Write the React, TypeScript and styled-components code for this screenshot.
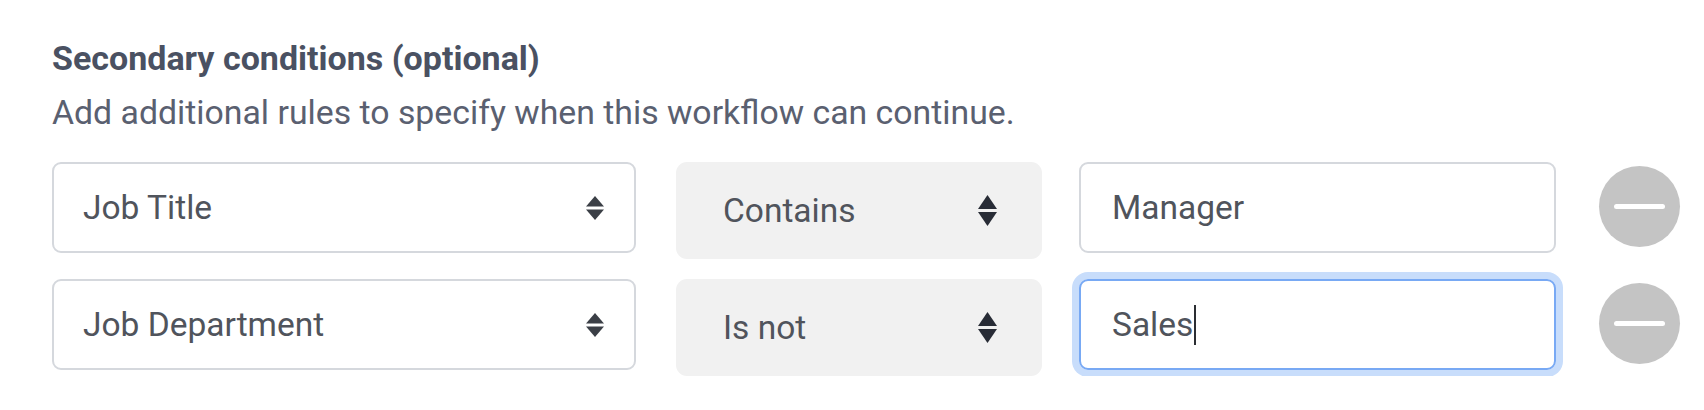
import React from "react";
import styled, { createGlobalStyle } from "styled-components";

const Global = createGlobalStyle`
  html, body { margin: 0; padding: 0; background: #ffffff; }
  body { font-family: Roboto, "Noto Sans", sans-serif; }
`;

const Page = styled.div`
  padding: 38px 0 0 52px;
  display: flex;
  flex-direction: column;
`;

const Title = styled.h2`
  margin: 0;
  font-family: Roboto, sans-serif;
  font-weight: 700;
  font-size: 34px;
  line-height: 40px;
  color: #4a5162;
`;

const Subtitle = styled.p`
  margin: 15px 0 0 0;
  font-family: Roboto, sans-serif;
  font-weight: 400;
  font-size: 33.8px;
  line-height: 40px;
  color: #5a6070;
`;

const Rows = styled.div`
  display: flex;
  flex-direction: column;
  gap: 20px;
  margin-top: 29px;
`;

const Row = styled.div`
  display: flex;
  align-items: flex-start;
`;

const OutlinedSelect = styled.div`
  box-sizing: border-box;
  width: 584px;
  height: 91px;
  border: 2px solid #d5d8dd;
  border-radius: 9px;
  padding: 0 30px 0 29px;
  display: flex;
  align-items: center;
  justify-content: space-between;
  font-size: 33.5px;
  color: #50545c;
  margin-right: 40px;
`;

const FilledSelect = styled.div`
  box-sizing: border-box;
  width: 366px;
  height: 97px;
  background: #f1f1f1;
  border-radius: 11px;
  padding: 0 45px 0 47px;
  display: flex;
  align-items: center;
  justify-content: space-between;
  font-size: 33.5px;
  color: #50545c;
  margin-right: 37px;
`;

const TextField = styled.div<{ $focused?: boolean }>`
  box-sizing: border-box;
  width: 477px;
  height: 91px;
  border: 2px solid ${(p) => (p.$focused ? "#78a9f4" : "#d5d8dd")};
  box-shadow: ${(p) => (p.$focused ? "0 0 0 7px #c8ddfb" : "none")};
  border-radius: 9px;
  padding: 0 31px;
  display: flex;
  align-items: center;
  font-size: 33.5px;
  color: #50545c;
  margin-right: 43px;
`;

const Caret = styled.span`
  display: inline-block;
  width: 2px;
  height: 40px;
  background: #2b2e33;
  margin-left: 1px;
  vertical-align: middle;
`;

const RemoveButton = styled.button`
  width: 81px;
  height: 81px;
  border-radius: 50%;
  border: none;
  background: #c4c4c4;
  padding: 0;
  margin-top: 4px;
  display: flex;
  align-items: center;
  justify-content: center;
  cursor: pointer;
`;

const MinusBar = styled.span`
  display: block;
  width: 51px;
  height: 5px;
  border-radius: 3px;
  background: #ffffff;
`;

const SortIcon = ({ w, h, color, gap }: { w: number; h: number; color: string; gap: number }) => {
  const half = (h - gap) / 2;
  return (
    <svg width={w} height={h} viewBox={`0 0 ${w} ${h}`}>
      <polygon points={`${w / 2},0 ${w},${half} 0,${half}`} fill={color} />
      <polygon points={`0,${half + gap} ${w},${half + gap} ${w / 2},${h}`} fill={color} />
    </svg>
  );
};

type Cond = { field: string; op: string; value: string; focused?: boolean };

const conditions: Cond[] = [
  { field: "Job Title", op: "Contains", value: "Manager" },
  { field: "Job Department", op: "Is not", value: "Sales", focused: true },
];

export default function App() {
  return (
    <>
      <Global />
      <Page>
        <Title>Secondary conditions (optional)</Title>
        <Subtitle>Add additional rules to specify when this workflow can continue.</Subtitle>
        <Rows>
          {conditions.map((c) => (
            <Row key={c.field}>
              <OutlinedSelect>
                <span>{c.field}</span>
                <SortIcon w={18} h={24} color="#3b3f46" gap={3} />
              </OutlinedSelect>
              <FilledSelect>
                <span>{c.op}</span>
                <SortIcon w={19} h={31} color="#282c36" gap={3} />
              </FilledSelect>
              <TextField $focused={c.focused}>
                <span>{c.value}</span>
                {c.focused && <Caret />}
              </TextField>
              <RemoveButton aria-label="Remove condition">
                <MinusBar />
              </RemoveButton>
            </Row>
          ))}
        </Rows>
      </Page>
    </>
  );
}
